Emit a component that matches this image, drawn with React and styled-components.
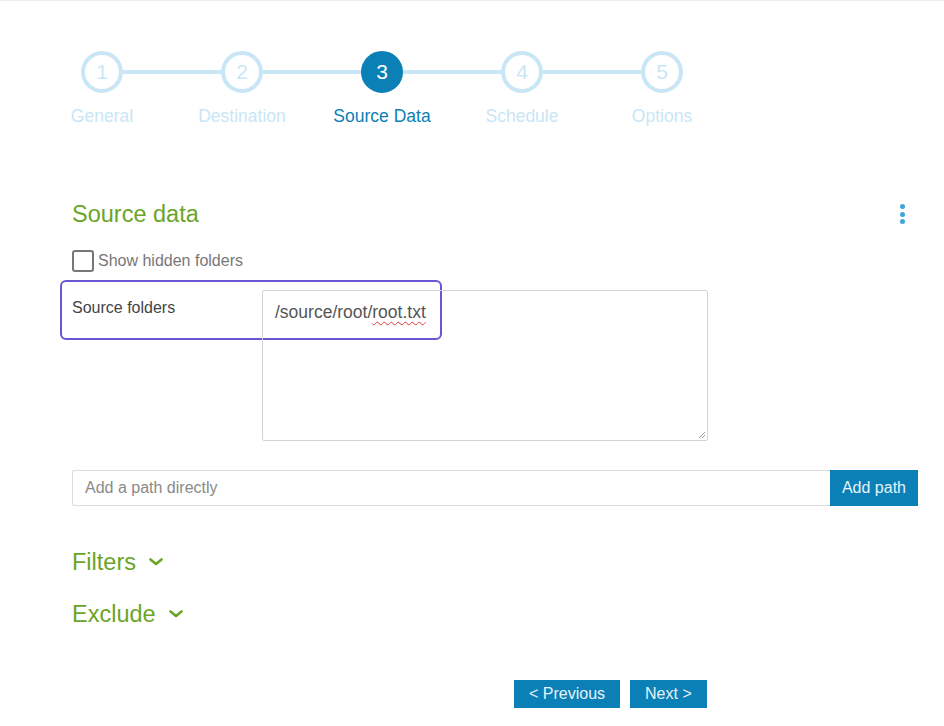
import styled, { createGlobalStyle } from "styled-components";

const BLUE = "#0b80b6";
const LIGHT = "#c9e6f6";
const GREEN = "#6aa527";

const GlobalStyle = createGlobalStyle`
    body {
        margin: 0;
        background: #fff;
        font-family: "Liberation Sans", Arial, sans-serif;
    }
`;

const Page = styled.div`
    width: 944px;
    height: 726px;
    overflow: hidden;
    border-top: 1px solid #eee;
    box-sizing: border-box;
`;

const Stepper = styled.ol`
    display: flex;
    list-style: none;
    margin: 0;
    padding: 50px 0 0 32px;
`;

const Step = styled.li`
    width: 140px;
    display: flex;
    flex-direction: column;
    align-items: center;
    position: relative;
    &:not(:first-child)::before {
        content: "";
        position: absolute;
        top: 19px;
        left: -49px;
        width: 98px;
        height: 4px;
        background: ${LIGHT};
    }
`;

const Circle = styled.div`
    width: 42px;
    height: 42px;
    box-sizing: border-box;
    border-radius: 50%;
    border: 4px solid ${(p) => (p.$active ? BLUE : LIGHT)};
    background: ${(p) => (p.$active ? BLUE : "#fff")};
    color: ${(p) => (p.$active ? "#fff" : LIGHT)};
    display: flex;
    align-items: center;
    justify-content: center;
    font-size: 21px;
`;

const StepLabel = styled.div`
    margin-top: 13px;
    font-size: 17.5px;
    line-height: 20px;
    color: ${(p) => (p.$active ? BLUE : LIGHT)};
    white-space: nowrap;
`;

const Content = styled.div`
    padding: 74px 26px 0 72px;
`;

const HeaderRow = styled.div`
    display: flex;
    justify-content: space-between;
    align-items: center;
`;

const Heading = styled.h2`
    margin: 0;
    font-size: 23.5px;
    line-height: 28px;
    font-weight: normal;
    color: ${GREEN};
`;

const Kebab = styled.button`
    border: 0;
    background: none;
    padding: 0;
    margin-right: 13px;
    display: flex;
    flex-direction: column;
    gap: 2.5px;
    span {
        width: 5px;
        height: 5px;
        border-radius: 50%;
        background: #3fa6d8;
    }
`;

const CheckRow = styled.label`
    display: flex;
    align-items: center;
    gap: 4px;
    margin-top: 22px;
    font-size: 16px;
    color: #777;
`;

const Box = styled.span`
    width: 22px;
    height: 22px;
    box-sizing: border-box;
    border: 2px solid #777;
    border-radius: 3px;
`;

const FieldRow = styled.div`
    position: relative;
    display: flex;
    margin-top: 18px;
`;

const FieldLabel = styled.div`
    width: 190px;
    padding-top: 8px;
    font-size: 16px;
    line-height: 20px;
    color: #444;
`;

const Highlight = styled.div`
    position: absolute;
    left: -12px;
    top: -10px;
    width: 382px;
    height: 60px;
    box-sizing: border-box;
    border: 2px solid #6a55d3;
    border-radius: 6px;
    pointer-events: none;
`;

const TextArea = styled.div`
    position: relative;
    width: 446px;
    height: 151px;
    box-sizing: border-box;
    border: 1px solid #d4d4d4;
    border-radius: 2px;
    padding: 10px 12px;
    font-size: 17.5px;
    line-height: 22px;
    color: #555;
`;

const Misspelled = styled.span`
    text-decoration: underline wavy #e53935;
    text-decoration-thickness: 1px;
    text-underline-offset: 3px;
`;

const Grip = styled.svg`
    position: absolute;
    right: 1px;
    bottom: 1px;
`;

const PathRow = styled.div`
    display: flex;
    margin-top: 29px;
    height: 36px;
`;

const PathInput = styled.input`
    flex: 1;
    box-sizing: border-box;
    border: 1px solid #dcdcdc;
    border-right: 0;
    border-radius: 2px 0 0 2px;
    padding: 0 12px;
    font-family: inherit;
    font-size: 16px;
    color: #555;
    outline: none;
    &::placeholder {
        color: #8a8a8a;
    }
`;

const Button = styled.button`
    background: ${BLUE};
    color: #e6f3fa;
    border: 0;
    border-radius: 0;
    font-family: inherit;
    font-size: 16px;
    padding: 0 ${(p) => p.$pad || 12}px;
    height: ${(p) => p.$h || 36}px;
`;

const Section = styled.div`
    display: flex;
    align-items: center;
    gap: 13px;
    margin-top: ${(p) => p.$top}px;
    font-size: 23.5px;
    line-height: 28px;
    color: ${GREEN};
`;

const Nav = styled.div`
    display: flex;
    gap: 10px;
    margin-top: 52px;
    padding-left: 442px;
`;

const steps = ["General", "Destination", "Source Data", "Schedule", "Options"];

function Chevron() {
    return (
        <svg width="14" height="8" viewBox="0 0 14 8">
            <path d="M1.5 1.5 L7 6 L12.5 1.5" fill="none" stroke={GREEN} strokeWidth="2.6" strokeLinecap="round" strokeLinejoin="round" />
        </svg>
    );
}

export default function App() {
    return (
        <Page>
            <GlobalStyle />
            <Stepper>
                {steps.map((s, i) => (
                    <Step key={s}>
                        <Circle $active={i === 2}>{i + 1}</Circle>
                        <StepLabel $active={i === 2}>{s}</StepLabel>
                    </Step>
                ))}
            </Stepper>
            <Content>
                <HeaderRow>
                    <Heading>Source data</Heading>
                    <Kebab aria-label="More"><span /><span /><span /></Kebab>
                </HeaderRow>
                <CheckRow><Box />Show hidden folders</CheckRow>
                <FieldRow>
                    <Highlight />
                    <FieldLabel>Source folders</FieldLabel>
                    <TextArea role="textbox">
                        /source/root/<Misspelled>root.txt</Misspelled>
                        <Grip width="10" height="10" viewBox="0 0 10 10">
                            <path d="M9 3 L3 9 M9 6 L6 9" stroke="#999" strokeWidth="1" />
                        </Grip>
                    </TextArea>
                </FieldRow>
                <PathRow>
                    <PathInput placeholder="Add a path directly" />
                    <Button>Add path</Button>
                </PathRow>
                <Section $top={42}>Filters <Chevron /></Section>
                <Section $top={24}>Exclude <Chevron /></Section>
                <Nav>
                    <Button $h={28} $pad={15}>&lt; Previous</Button>
                    <Button $h={28} $pad={15}>Next &gt;</Button>
                </Nav>
            </Content>
        </Page>
    );
}
